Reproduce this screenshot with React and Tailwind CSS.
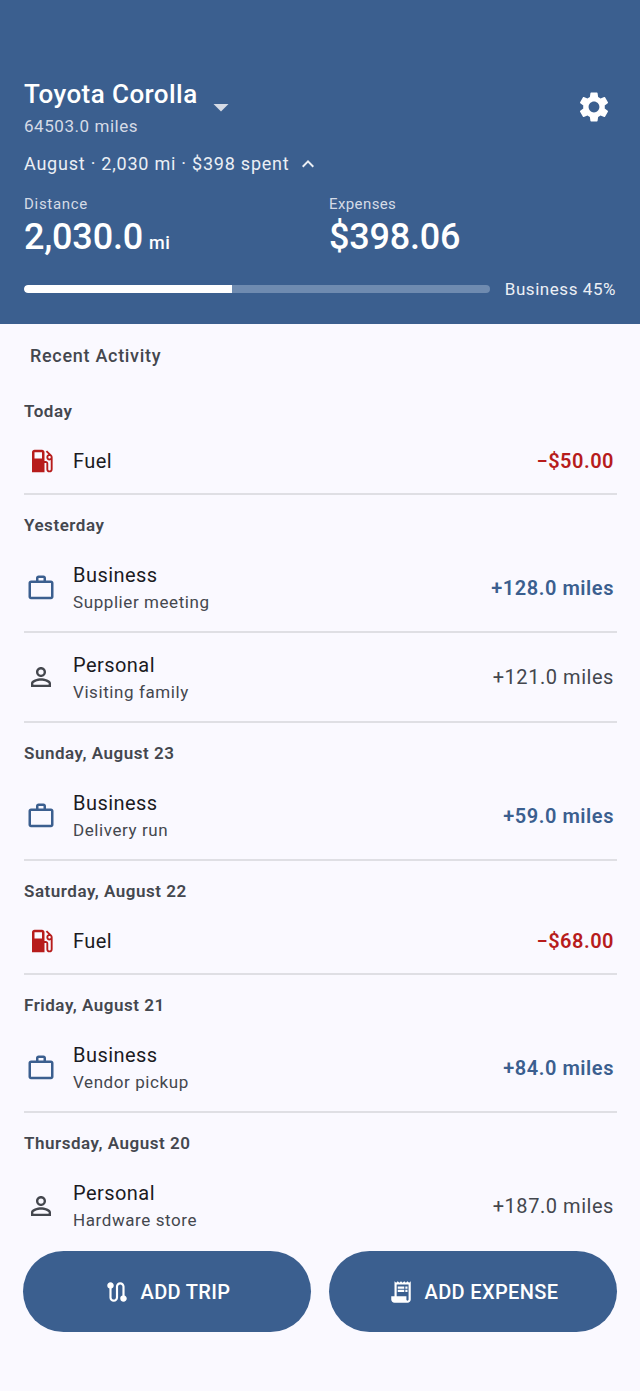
import { MdSettings, MdLocalGasStation, MdWorkOutline, MdPersonOutline, MdRoute, MdReceiptLong, MdArrowDropDown, MdKeyboardArrowUp } from 'react-icons/md'

const sections = [
  { title: 'Today', rows: [{ type: 'fuel', amount: '−$50.00' }] },
  {
    title: 'Yesterday',
    rows: [
      { type: 'business', note: 'Supplier meeting', amount: '+128.0 miles' },
      { type: 'personal', note: 'Visiting family', amount: '+121.0 miles' },
    ],
  },
  { title: 'Sunday, August 23', rows: [{ type: 'business', note: 'Delivery run', amount: '+59.0 miles' }] },
  { title: 'Saturday, August 22', rows: [{ type: 'fuel', amount: '−$68.00' }] },
  { title: 'Friday, August 21', rows: [{ type: 'business', note: 'Vendor pickup', amount: '+84.0 miles' }] },
  { title: 'Thursday, August 20', rows: [{ type: 'personal', note: 'Hardware store', amount: '+187.0 miles' }] },
]

function Row({ row, tall }) {
  if (row.type === 'fuel') {
    return (
      <div className="flex h-[65px] items-center border-b-2 border-[#dfdfe4] pb-[1px]">
        <MdLocalGasStation className="ml-[3px] text-[#b71c1c]" size={30} />
        <div className="ml-[16px] flex-1 text-[20px] tracking-[0.45px] text-[#1b1b1f]">Fuel</div>
        <div className="mr-[3px] text-[20px] font-semibold tracking-[0.5px] text-[#b71c1c]">{row.amount}</div>
      </div>
    )
  }
  const isBusiness = row.type === 'business'
  return (
    <div className={tall
      ? 'flex h-[90px] items-center border-b-2 border-[#dfdfe4]'
      : 'flex h-[89px] items-center border-b-2 border-[#dfdfe4]'}>
      {isBusiness
        ? <MdWorkOutline className="ml-[2px] text-[#3b5f8f]" size={30} />
        : <MdPersonOutline className="ml-[2px] text-[#44474e]" size={30} />}
      <div className="ml-[17px] flex-1 pt-[3px]">
        <div className="text-[20px] leading-[27px] tracking-[0.45px] text-[#1b1b1f] capitalize">{row.type}</div>
        <div className="text-[17px] leading-[27px] tracking-[0.58px] text-[#44474e]">{row.note}</div>
      </div>
      <div className={isBusiness
        ? 'mr-[3px] text-[20px] font-semibold tracking-[0.55px] text-[#3b5f8f]'
        : 'mr-[3px] text-[20px] tracking-[0.55px] text-[#44474e]'}>{row.amount}</div>
    </div>
  )
}

export default function App() {
  return (
    <div className="flex h-screen flex-col overflow-hidden bg-[#faf9ff] font-['Roboto',sans-serif]">
      <header className="h-[324px] shrink-0 bg-[#3b5f8f] px-[24px] pt-[77px] text-white">
        <div className="flex items-start justify-between">
          <div>
            <div className="flex h-[34px] items-start">
              <span className="text-[26px] font-medium leading-[34px] tracking-[0.42px]">Toyota Corolla</span>
              <MdArrowDropDown className="ml-[5px] mt-[12px] text-[#d5dbe6]" size={36} />
            </div>
            <div className="mt-[3px] text-[17px] leading-[24px] tracking-[0.55px] text-[#d5dbe6]">64503.0 miles</div>
          </div>
          <MdSettings className="mr-[4px] mt-[12px] text-white" size={36} />
        </div>
        <div className="mt-[13px] flex items-center text-[18px] leading-[26px] tracking-[0.77px] text-[#ebeff5]">
          August · 2,030 mi · $398 spent
          <MdKeyboardArrowUp className="ml-[7px]" size={24} />
        </div>
        <div className="mt-[17px] flex">
          <div className="w-[305px]">
            <div className="text-[15px] leading-[20px] tracking-[0.7px] text-[#d5dbe6]">Distance</div>
            <div className="text-[36px] font-medium leading-[46px] tracking-[-0.2px]">
              2,030.0<span className="ml-[6px] text-[18px] tracking-[0.5px]">mi</span>
            </div>
          </div>
          <div>
            <div className="text-[15px] leading-[20px] tracking-[0.4px] text-[#d5dbe6]">Expenses</div>
            <div className="text-[36px] font-medium leading-[46px] tracking-[-0.2px]">$398.06</div>
          </div>
        </div>
        <div className="mt-[11px] flex items-center justify-between">
          <div className="h-[8px] w-[466px] overflow-hidden rounded-full bg-[#6f8bb0]">
            <div className="h-full w-[208px] rounded-l-full bg-white" />
          </div>
          <div className="text-[17px] leading-[24px] tracking-[0.55px] text-[#ebeff5]">Business 45%</div>
        </div>
      </header>

      <main className="min-h-0 flex-1 overflow-hidden pl-[24px] pr-[23px]">
        <h2 className="ml-[6px] mt-[20px] text-[18px] font-medium leading-[24px] tracking-[0.7px] text-[#44474e]">Recent Activity</h2>
        <div className="mt-[13px]">
          {sections.map(section => (
            <section key={section.title}>
              <h3 className="pb-[9px] pt-[20px] text-[17px] font-semibold leading-[20px] tracking-[0.53px] text-[#44474e]">{section.title}</h3>
              {section.rows.map((row, i) => <Row key={i} row={row} tall={i > 0} />)}
            </section>
          ))}
        </div>
      </main>

      <footer className="flex h-[159px] shrink-0 gap-[18px] px-[23px] pt-[19px]">
        <button className="flex h-[81px] flex-1 items-center justify-center gap-[11px] rounded-full bg-[#3b5f8f] text-[20px] font-medium tracking-[0.35px] text-white">
          <MdRoute size={26} />
          ADD TRIP
        </button>
        <button className="flex h-[81px] flex-1 items-center justify-center gap-[11px] rounded-full bg-[#3b5f8f] text-[20px] font-medium tracking-[0.35px] text-white">
          <MdReceiptLong size={26} />
          ADD EXPENSE
        </button>
      </footer>
    </div>
  )
}
